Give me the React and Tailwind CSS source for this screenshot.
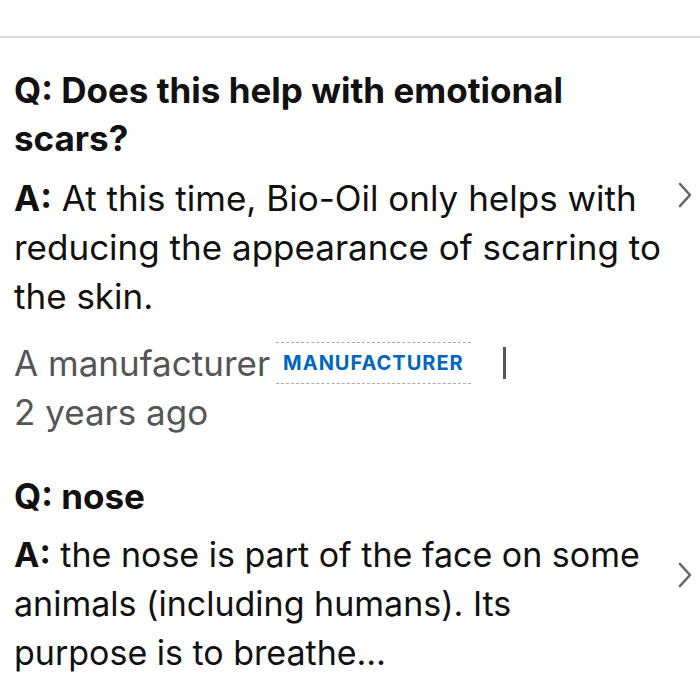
import React from 'react'

function Chevron({ className }) {
  return (
    <svg className={className} width="14" height="26" viewBox="0 0 14 26" fill="none">
      <path d="M2 2 L12 13 L2 24" stroke="#666" strokeWidth="2.6" strokeLinecap="round" strokeLinejoin="round" />
    </svg>
  )
}

export default function App() {
  return (
    <div className="w-[700px] h-[700px] bg-white overflow-hidden font-['Inter',sans-serif] text-[#111]">
      <div className="h-[36px]" />
      <div className="h-[2px] bg-[#dddddd]" />

      <div className="pl-[14px] pr-[8px]">
        {/* first question */}
        <h2 className="mt-[28px] text-[35px] leading-[48px] font-bold">
          Q: Does this help with emotional<br />scars?
        </h2>
        <div className="mt-[12px] flex items-start">
          <p className="flex-1 text-[35px] leading-[49px]">
            <span className="font-bold">A:</span> At this time, Bio-Oil only helps with<br />
            reducing the appearance of scarring to<br />the skin.
          </p>
          <Chevron className="mt-[8px]" />
        </div>

        <div className="mt-[18px] flex items-center text-[35px] leading-[48px] text-[#555]">
          <span>A manufacturer</span>
          <span className="ml-[6px] px-[7px] h-[42px] flex items-center border-y border-dashed border-[#aaa] text-[20px] font-bold tracking-[1px] text-[#0066c0]">
            MANUFACTURER
          </span>
          <span className="ml-[32px] w-[3px] h-[32px] bg-[#555]" />
        </div>
        <div className="mt-[1px] text-[35px] leading-[48px] text-[#555]">2 years ago</div>

        {/* second question */}
        <h2 className="mt-[36px] text-[35px] leading-[48px] font-bold">Q: nose</h2>
        <div className="mt-[10px] flex items-start">
          <p className="flex-1 text-[34px] leading-[49px]">
            <span className="font-bold">A:</span> the nose is part of the face on some<br />
            animals (including humans). Its<br />purpose is to breathe…
          </p>
          <Chevron className="mt-[32px]" />
        </div>
      </div>
    </div>
  )
}
